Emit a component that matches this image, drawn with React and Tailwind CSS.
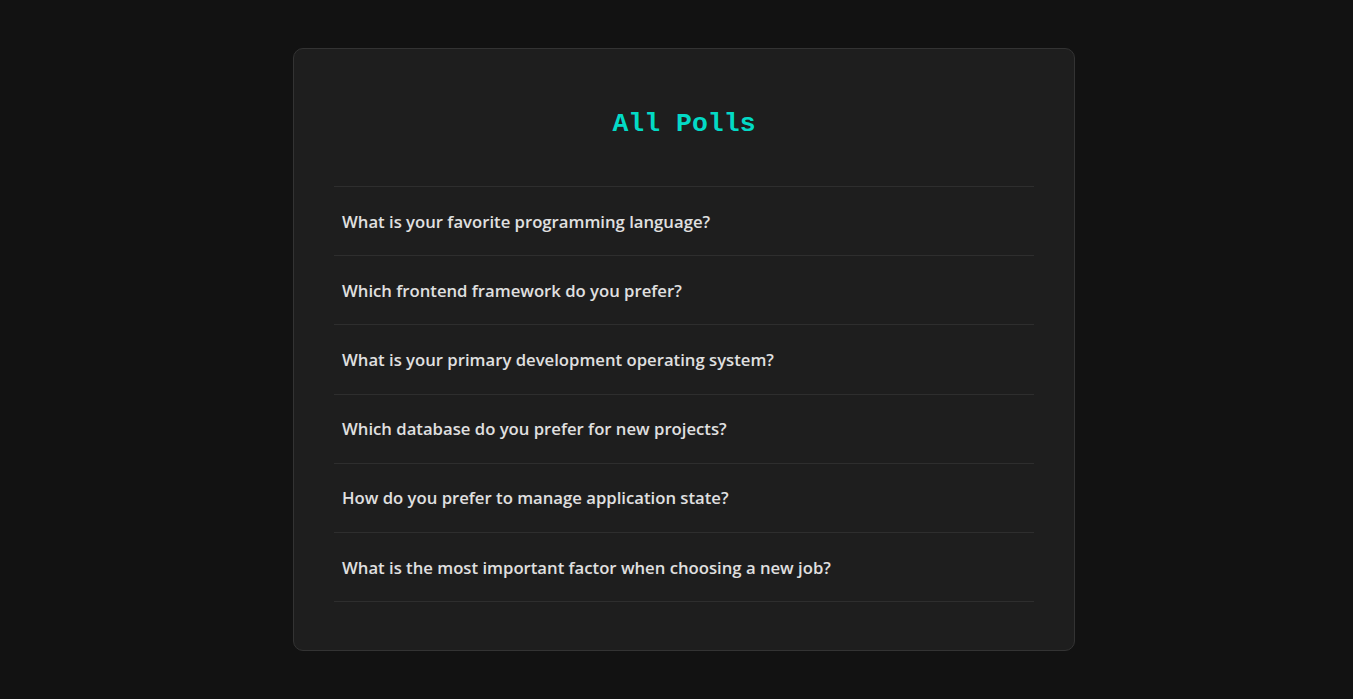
import React from "react";

const polls = [
  "What is your favorite programming language?",
  "Which frontend framework do you prefer?",
  "What is your primary development operating system?",
  "Which database do you prefer for new projects?",
  "How do you prefer to manage application state?",
  "What is the most important factor when choosing a new job?",
];

const App = () => {
  return (
    <div className="min-h-screen bg-[#121212] pt-12 pl-[15px] font-['Open_Sans',sans-serif]">
      <div className="mx-auto w-[782px] rounded-[10px] border border-[#333] bg-[#1e1e1e] px-10 pt-[59px] pb-12">
        <h1 className="mb-[46px] text-center font-['Liberation_Mono',monospace] text-[26.5px] leading-8 font-bold text-[#03dac6]">
          All Polls
        </h1>
        <ul className="border-t border-[#2e2e2e]">
          {polls.map((q) => (
            <li key={q} className="flex h-[69.2px] items-center border-b border-[#2e2e2e] px-2">
              <span className="text-[16.7px] font-semibold text-[#e0e0e0]">{q}</span>
            </li>
          ))}
        </ul>
      </div>
    </div>
  );
};

export default App;
